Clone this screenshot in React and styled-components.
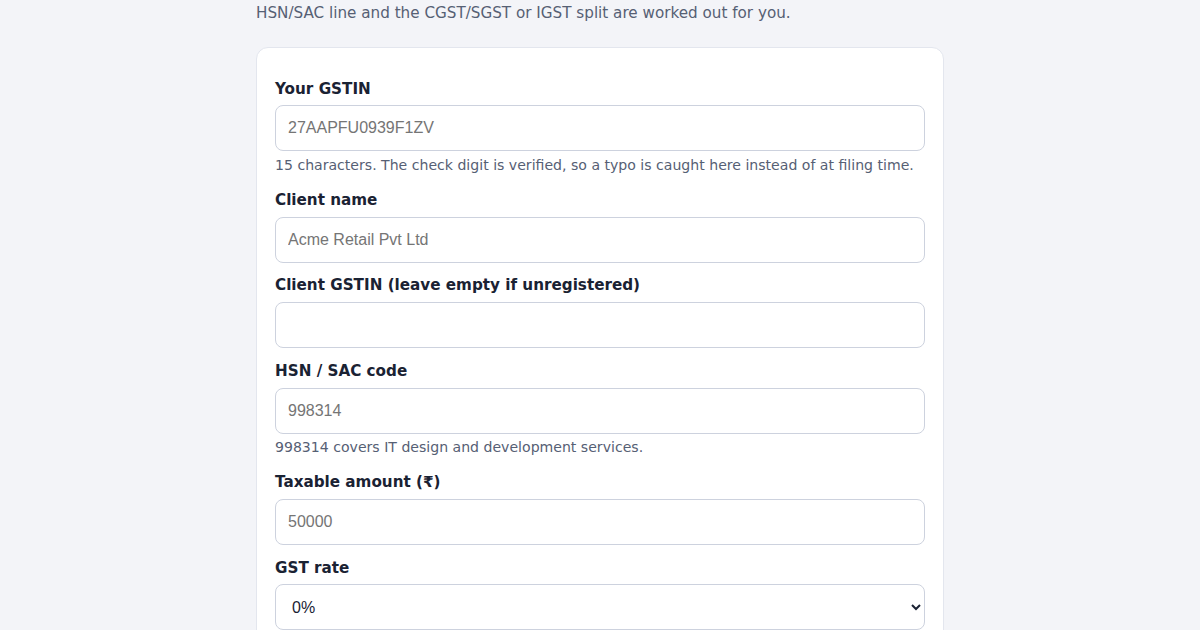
import React from 'react'
import styled, { createGlobalStyle } from 'styled-components'

const GlobalStyle = createGlobalStyle`
  html, body {
    margin: 0;
    padding: 0;
    background: #f3f4f8;
  }
  body {
    font-family: "DejaVu Sans", sans-serif;
    color: #1a2233;
  }
`

const fields = [
  {
    id: 'gstin',
    label: 'Your GSTIN',
    placeholder: '27AAPFU0939F1ZV',
    help: '15 characters. The check digit is verified, so a typo is caught here instead of at filing time.',
  },
  { id: 'client', label: 'Client name', placeholder: 'Acme Retail Pvt Ltd' },
  { id: 'clientGstin', label: 'Client GSTIN (leave empty if unregistered)', placeholder: '' },
  {
    id: 'hsn',
    label: 'HSN / SAC code',
    placeholder: '998314',
    help: '998314 covers IT design and development services.',
  },
  { id: 'amount', label: 'Taxable amount (₹)', placeholder: '50000' },
]

function App() {
  return (
    <>
      <GlobalStyle />
      <Page>
        <Intro>HSN/SAC line and the CGST/SGST or IGST split are worked out for you.</Intro>
        <Card>
          {fields.map((f) => (
            <Field key={f.id}>
              <Label htmlFor={f.id}>{f.label}</Label>
              <Input id={f.id} placeholder={f.placeholder} />
              {f.help && <Help>{f.help}</Help>}
            </Field>
          ))}
          <Field>
            <Label htmlFor="rate">GST rate</Label>
            <Select id="rate" defaultValue="0">
              <option value="0">0%</option>
              <option value="5">5%</option>
              <option value="12">12%</option>
              <option value="18">18%</option>
              <option value="28">28%</option>
            </Select>
          </Field>
        </Card>
      </Page>
    </>
  )
}

export default App

const Page = styled.div`
  width: 688px;
  margin: 0 auto;
  padding-top: 1.6px;
`

const Intro = styled.p`
  margin: 0 0 22.6px;
  font-size: 15.2px;
  line-height: 22.8px;
  color: #566074;
`

const Card = styled.div`
  background: #ffffff;
  border: 1px solid #e3e6ee;
  border-radius: 12px;
  padding: 28.6px 18px 24px;
  display: flex;
  flex-direction: column;
  gap: 10.6px;
`

const Field = styled.div`
  display: flex;
  flex-direction: column;
`

const Label = styled.label`
  font-size: 15.2px;
  line-height: 24.8px;
  font-weight: 700;
  color: #1a2233;
  margin-bottom: 4px;
`

const Input = styled.input`
  box-sizing: border-box;
  height: 46px;
  width: 100%;
  padding: 0 12px;
  border: 1px solid #cdd2de;
  border-radius: 8px;
  background: #ffffff;
  font-family: "Liberation Sans", Arial, sans-serif;
  font-size: 16px;
  color: #1a2233;

  &::placeholder {
    color: #757575;
  }
`

const Select = styled.select`
  box-sizing: border-box;
  height: 46px;
  width: 100%;
  padding: 0 8px 0 12px;
  border: 1px solid #cdd2de;
  border-radius: 8px;
  background: #ffffff;
  font-family: "Liberation Sans", Arial, sans-serif;
  font-size: 16px;
  color: #1a2233;
`

const Help = styled.div`
  margin: 3.5px 0 1.5px;
  font-size: 14.08px;
  line-height: 21px;
  color: #566074;
`
